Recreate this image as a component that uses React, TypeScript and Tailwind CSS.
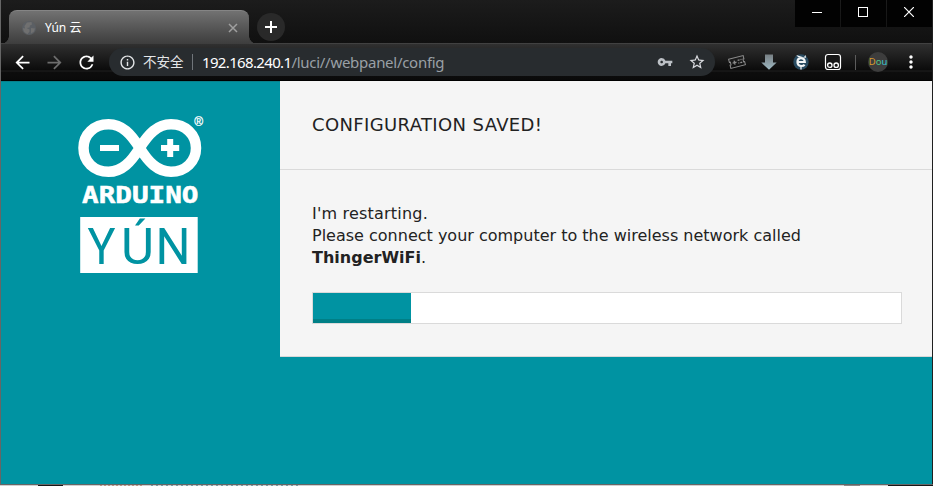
import React from 'react';
import { MdArrowBack, MdArrowForward, MdRefresh, MdInfoOutline, MdVpnKey, MdStarBorder, MdMoreVert } from 'react-icons/md';

const uiFont = "font-['Noto_Sans','Noto_Sans_CJK_SC',sans-serif]";

function Tab() {
  return (
    <div className="relative ml-[8px] mt-[10px] flex h-[34px] w-[240px] items-center rounded-t-[8px] border-t border-[#858585] bg-linear-to-b from-[#727272] to-[#3d3d3d] pl-[12px] pr-[11px]">
      <span className="absolute -left-[8px] bottom-0 h-[8px] w-[8px] bg-[radial-gradient(circle_at_0_0,transparent_7.5px,#404040_8px)]" />
      <span className="absolute -right-[8px] bottom-0 h-[8px] w-[8px] bg-[radial-gradient(circle_at_100%_0,transparent_7.5px,#404040_8px)]" />
      <svg className="size-[16px] shrink-0" viewBox="0 0 16 16">
        <circle cx="8" cy="8" r="7" fill="#5b5f64" />
        <path d="M6 2.500L10.500 2l.5 2.500-2 1-.5 2-3 .5 3 1.500v2L6.500 14Q2 12.500 2 8l2 .5L3.500 6z" fill="#707070" />
        <path d="M10 8l4 .5-1 3-3 2z" fill="#707070" />
      </svg>
      <span className="ml-[8px] flex-1 whitespace-nowrap text-[12px] leading-[16px] text-white">Yún 云</span>
      <svg className="size-[10px]" viewBox="0 0 10 10" stroke="#a0a0a0" strokeWidth="1.5">
        <path d="M1 1l8 8M9 1L1 9" />
      </svg>
    </div>
  );
}

function WindowControls() {
  return (
    <div className="ml-auto flex gap-px">
      <div className="flex h-[27px] w-[45px] justify-center bg-[#020202]">
        <div className="mr-px mt-[12px] h-px w-[10px] bg-white" />
      </div>
      <div className="flex h-[27px] w-[45px] justify-center bg-[#020202]">
        <div className="mr-[2px] mt-[7px] size-[10px] border border-white" />
      </div>
      <div className="flex h-[27px] w-[45px] justify-center bg-[#020202]">
        <svg className="mr-[2px] mt-[7px] size-[10px]" viewBox="0 0 10 10" stroke="white" strokeWidth="1.2">
          <path d="M0 0l10 10M10 0L0 10" />
        </svg>
      </div>
    </div>
  );
}

function Toolbar() {
  return (
    <div className="flex h-[37px] items-center border-t border-[#414141] bg-[linear-gradient(to_bottom,#303030_0,#0b0b0b_26px,#1f1f1f_27px,#0d0d0d_28px,#0a0a0a_100%)]">
      <MdArrowBack className="ml-[11px] size-[21px] text-white" />
      <MdArrowForward className="ml-[11px] size-[21px] text-[#6d6d6d]" />
      <MdRefresh className="ml-[11px] size-[21px] text-white" />
      <div className="ml-[12px] flex h-[28px] w-[606px] items-center rounded-full bg-[#282c2f]">
        <MdInfoOutline className="ml-[10px] size-[17px] text-[#e4e6e8]" />
        <span className="ml-[7px] w-[41px] whitespace-nowrap text-[13.5px] leading-[18px] text-[#e4e6e8]">不安全</span>
        <span className="ml-[8px] h-[16px] w-px bg-[#70757a]" />
        <span className="ml-[9px] whitespace-nowrap text-[15px] leading-[20px] tracking-[-0.28px] text-[#9aa0a6]">
          <span className="tracking-[-0.65px] text-white">192.168.240.1</span>/luci//webpanel/config
        </span>
        <MdVpnKey className="ml-auto size-[16px] text-[#bdc1c6]" />
        <MdStarBorder className="ml-[15px] mr-[9px] size-[18px] text-[#dadce0]" />
      </div>
      <svg className="ml-[13px] size-[18px]" viewBox="0 0 18 18" fill="none" stroke="#8d8d8d">
        <g transform="rotate(-14 9 9)">
          <path d="M1.500 4.300h15v3.300h-1v2.800h1v3.300h-15v-3.300h1V7.600h-1z" />
          <path d="M4.500 9h4M6.500 7v4M10 7.500h2M13 7.500h1M10 10.500h1M12 10.500h2" strokeWidth="1.300" />
        </g>
      </svg>
      <svg className="ml-[15px] size-[16px]" viewBox="0 0 16 16">
        <defs>
          <linearGradient id="download" x1="0" y1="0" x2="0" y2="1">
            <stop stopColor="#777f83" />
            <stop offset="1" stopColor="#9eb8c2" />
          </linearGradient>
        </defs>
        <path d="M4 .5h8v8h3.700L8 15.800.3 8.500H4z" fill="url(#download)" />
      </svg>
      <svg className="ml-[16px] size-[16px]" viewBox="0 0 16 16">
        <circle cx="8" cy="8" r="7.700" fill="#294b61" />
        <path d="M3.200 1l1.800 2h6l1.800-2v3z" fill="#f2f5f6" />
        <path d="M4.500 8h7.300Q11.500 4.200 8 4.200T4.500 8Q4.500 12 8.500 12 10.500 12 11.600 10.800" fill="none" stroke="#f2f5f6" strokeWidth="2.200" />
        <path d="M8 12v3.500" stroke="#f2f5f6" strokeWidth="1.300" />
      </svg>
      <svg className="ml-[15px] size-[18px]" viewBox="0 0 18 18" fill="none" stroke="white">
        <rect x="1.500" y="1.500" width="15" height="15" rx="2.500" fill="#161616" strokeWidth="1.200" />
        <circle cx="5.800" cy="12.200" r="2.200" strokeWidth="1.300" />
        <circle cx="12.200" cy="12.200" r="2.200" strokeWidth="1.300" />
      </svg>
      <span className="ml-[13px] h-[15px] w-px bg-[#5c5c5c]" />
      <div className="ml-[12px] flex size-[20px] items-center justify-center rounded-full bg-[#3d3d3d] text-[9.5px] leading-none">
        <span className="text-[#d99a2b]">D</span><span className="text-[#4fc286]">o</span><span className="text-[#38c6d3]">u</span>
      </div>
      <MdMoreVert className="ml-[13px] size-[20px] text-white" />
    </div>
  );
}

function Logo() {
  return (
    <svg className="ml-[73px] mt-[30px]" width="134" height="166" viewBox="74 112 134 166">
      <path d="M139.700 148C131 134 122 124.300 108.500 124.300C94 124.300 83.500 134.500 83.500 148S94 171.800 108.500 171.800C122 171.800 131 162 139.700 148C148.400 134 157.500 124.300 171 124.300C185.500 124.300 196 134.500 196 148S185.500 171.800 171 171.800C157.500 171.800 148.400 162 139.700 148Z" fill="none" stroke="white" strokeWidth="10.500" />
      <path d="M100 145h19v6H100zM161 145h6.200v-6h6v6h6v6h-6v6h-6v-6H161z" fill="white" />
      <text x="194.300" y="126.300" fontSize="12" fill="white" stroke="white" strokeWidth="0.3" className="font-['Liberation_Sans',sans-serif]">®</text>
      <text x="82" y="202.700" fontSize="22.500" textLength="116.500" lengthAdjust="spacingAndGlyphs" fill="white" stroke="white" strokeWidth="0.5" className="font-['DejaVu_Sans_Mono',monospace] font-bold">ARDUINO</text>
      <rect x="80.200" y="217" width="117.500" height="56" fill="white" />
      <g fontSize="50" fill="#0093a2" className="font-['Roboto',sans-serif]">
        <text x="87.500" y="264" textLength="28" lengthAdjust="spacingAndGlyphs">Y</text>
        <text x="121" y="264" textLength="33" lengthAdjust="spacingAndGlyphs">Ú</text>
        <text x="155.500" y="264" textLength="35" lengthAdjust="spacingAndGlyphs">N</text>
      </g>
    </svg>
  );
}

function ProgressBar() {
  return (
    <div className="mt-[23px] h-[32px] w-[590px] border border-[#dadada] bg-white">
      <div className="h-full w-[98px] border-b-4 border-[#007f86] bg-[#0093a2]" />
    </div>
  );
}

export default function App() {
  return (
    <div className={`h-[486px] w-[933px] overflow-hidden bg-[#161616] ${uiFont}`}>
      <div className="flex h-[484px] w-[933px] flex-col border-l border-r border-l-[#666] border-r-[#202020]">
        <div className="flex h-[43px] shrink-0 bg-linear-to-b from-[#1c1c1c] to-[#101010]">
          <Tab />
          <div className="ml-[8px] mt-[13px] flex size-[28px] items-center justify-center rounded-full bg-[#292929]">
            <svg className="size-[12px]" viewBox="0 0 12 12" stroke="white" strokeWidth="2">
              <path d="M6 0v12M0 6h12" />
            </svg>
          </div>
          <WindowControls />
        </div>
        <Toolbar />
        <div className="h-px shrink-0 bg-black" />
        <div className="flex flex-1 bg-[#0093a2]">
          <aside className="w-[279px] shrink-0 border-t border-[#08808b]">
            <Logo />
          </aside>
          <main className="h-[276px] flex-1 border-b border-[#d8d8d8] bg-[#f5f5f5] font-['DejaVu_Sans',Verdana,sans-serif] text-[#222]">
            <h1 className="h-[89px] border-b border-[#dadada] pl-[32px] pt-[33px] text-[18px] leading-[22px] tracking-[0.37px]">CONFIGURATION SAVED!</h1>
            <div className="pl-[32px] pt-[33px]">
              <p className="whitespace-nowrap text-[16px] leading-[22px]">
                <span className="tracking-[0.2px]">I'm restarting.</span><br />
                Please connect your computer to the wireless network called<br />
                <b>ThingerWiFi</b>.
              </p>
              <ProgressBar />
            </div>
          </main>
        </div>
      </div>
      <div className="h-px bg-[#666]" />
      <div className="flex h-px bg-[#d0d0d0]">
        <span className="ml-[38px] w-[25px] bg-[#181818]" />
        <span className="ml-[37px] w-[44px] bg-[repeating-linear-gradient(90deg,#b99483_0_2px,#d0d0d0_2px_4px)]" />
        <span className="ml-[7px] w-[150px] bg-[repeating-linear-gradient(90deg,#7799a0_0_2px,#d0d0d0_2px_5px)]" />
        <span className="ml-auto mr-[28px] w-[16px] bg-[#888]" />
        <span className="w-[45px] bg-[#181818]" />
      </div>
    </div>
  );
}
